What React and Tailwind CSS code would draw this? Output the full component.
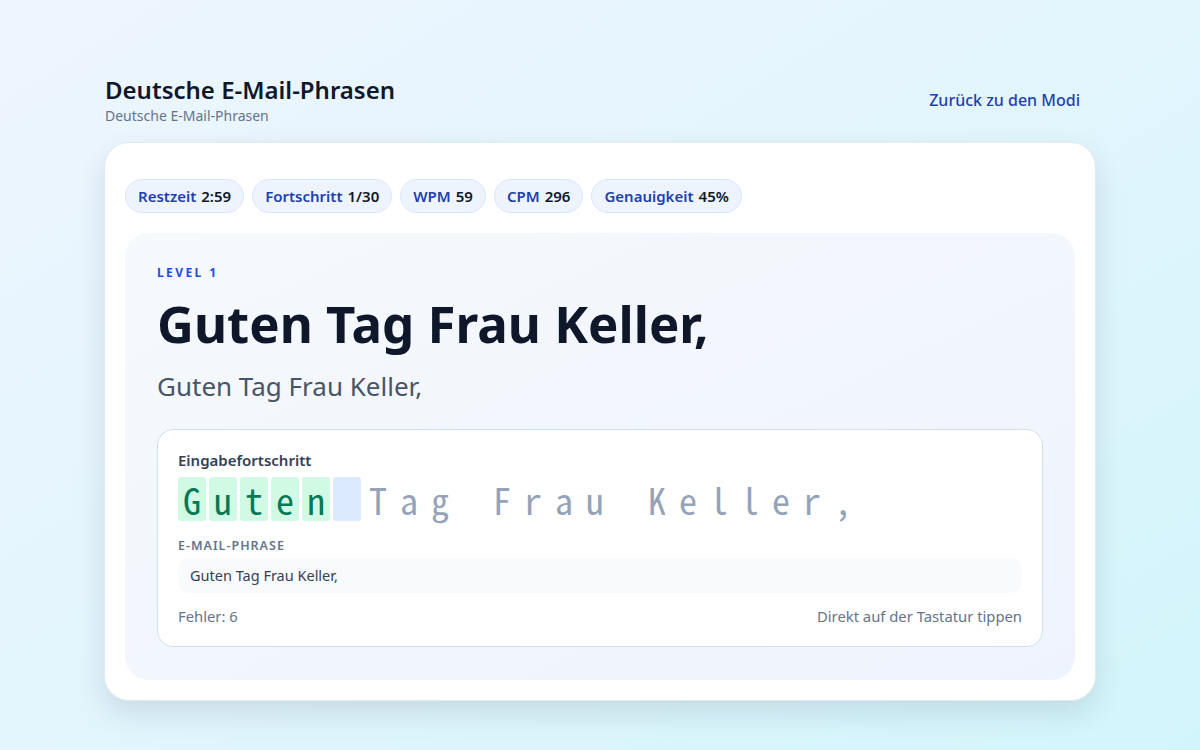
import React from "react";

const typed = ["G", "u", "t", "e", "n"];
const rest = "Tag Frau Keller,".split("");

export default function App() {
  return (
    <div
      className="min-h-[750px] w-full bg-gradient-to-br from-[#eef5fe] via-[#e2f5fd] to-[#d2f5fb]"
      style={{ fontFamily: "'Noto Sans', sans-serif" }}
    >
      <div className="mx-auto w-[990px] pt-[74px]">
        <header className="flex items-start justify-between">
          <div className="flex flex-col">
            <h1 className="text-[24px] font-semibold leading-[32px] text-[#0f172a]">Deutsche E-Mail-Phrasen</h1>
            <p className="text-[14px] leading-[20px] text-[#64748b]">Deutsche E-Mail-Phrasen</p>
          </div>
          <a className="mt-[14px] mr-[15px] text-[16px] font-medium leading-[24px] text-[#1e40af]">Zurück zu den Modi</a>
        </header>

        <main className="mt-[17px] rounded-[24px] bg-white p-[20px] shadow-[0_0_0_1px_#e2eaf3,0_12px_30px_rgba(15,23,42,0.12)]">
          <div className="flex gap-[8px] pt-[16px]">
            {[
              ["Restzeit", "2:59"],
              ["Fortschritt", "1/30"],
              ["WPM", "59"],
              ["CPM", "296"],
              ["Genauigkeit", "45%"],
            ].map(([k, v]) => (
              <div
                key={k}
                className="flex h-[34px] items-center gap-[5px] rounded-full border border-[#dbe6f7] bg-[#eef4fe] px-[12px] text-[15px] font-semibold"
              >
                <span className="text-[#1e40af]">{k}</span>
                <span className="text-[#0f172a]">{v}</span>
              </div>
            ))}
          </div>

          <section className="mt-[20px] rounded-[24px] bg-gradient-to-br from-[#f6f9fd] to-[#eef4fd] px-[32px] pt-[32px] pb-[33px]">
            <div className="text-[12px] font-bold leading-[16px] tracking-[0.2em] text-[#1d4ed8]">LEVEL 1</div>
            <h2 className="mt-[14px] text-[51px] font-bold leading-[56px] text-[#0f172a]">Guten Tag Frau Keller,</h2>
            <p className="mt-[19px] text-[26px] leading-[32px] text-[#475569]">Guten Tag Frau Keller,</p>

            <div className="mt-[27px] rounded-[16px] border border-[#cfe0ee] bg-white px-[20px] pt-[20px] pb-[20px]">
              <div className="text-[15px] font-semibold leading-[20px] text-[#334155]">Eingabefortschritt</div>
              <div
                className="mt-[7px] flex gap-[3px] text-[36px] leading-[44px]"
                style={{ fontFamily: "'Noto Sans Mono CJK JP', 'DejaVu Sans Mono', monospace" }}
              >
                {typed.map((c, i) => (
                  <span key={i} className="flex h-[44px] w-[28px] items-center justify-center rounded-[3px] bg-[#d1fae5] text-[#047857]">
                    {c}
                  </span>
                ))}
                <span className="flex h-[44px] w-[28px] items-center justify-center rounded-[3px] bg-[#dbeafe]">&nbsp;</span>
                {rest.map((c, i) => (
                  <span key={i} className="flex h-[44px] w-[28px] items-center justify-center text-[#94a3b8]">
                    {c === " " ? "\u00a0" : c}
                  </span>
                ))}
              </div>
              <div className="mt-[17px] text-[12.5px] font-semibold leading-[16px] tracking-[0.08em] text-[#64748b]">E-MAIL-PHRASE</div>
              <div className="mt-[4px] flex h-[35px] items-center rounded-[12px] bg-[#f8fafc] px-[12px] text-[14.5px] text-[#334155]">
                Guten Tag Frau Keller,
              </div>
              <div className="mt-[13px] flex justify-between text-[14.8px] leading-[20px] text-[#64748b]">
                <span>Fehler: 6</span>
                <span>Direkt auf der Tastatur tippen</span>
              </div>
            </div>
          </section>
        </main>
      </div>
    </div>
  );
}
